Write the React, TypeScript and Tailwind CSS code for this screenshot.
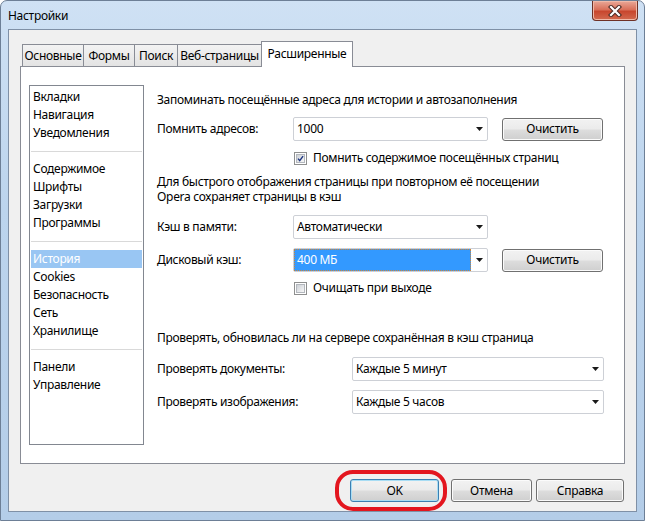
import type { ReactNode } from 'react';

const groups = [
  ['Вкладки', 'Навигация', 'Уведомления'],
  ['Содержимое', 'Шрифты', 'Загрузки', 'Программы'],
  ['История', 'Cookies', 'Безопасность', 'Сеть', 'Хранилище'],
  ['Панели', 'Управление'],
];

const tabs = [
  { label: 'Основные', w: 'w-[62px]' },
  { label: 'Формы', w: 'w-[52px]' },
  { label: 'Поиск', w: 'w-[44px]' },
  { label: 'Веб-страницы', w: 'w-[85px]' },
];

function Arrow() {
  return (
    <svg width="7" height="4" viewBox="0 0 7 4" aria-hidden="true">
      <path d="M0 0h7L3.5 4z" fill="#1a1a1a" />
    </svg>
  );
}

function Combo({ value, width, selected = false }: { value: string; width: string; selected?: boolean }) {
  return (
    <div className={`flex h-[24px] ${width} items-center rounded-[2px] border border-[#cdd0d6] bg-white`}>
      {selected ? (
        <div className="flex h-full flex-1 items-center border border-dotted border-[#c8843c] bg-[#3399ff] pl-[2px] text-white">
          {value}
        </div>
      ) : (
        <div className="flex-1 pl-[3px]">{value}</div>
      )}
      <span className="flex w-[16px] justify-center">
        <Arrow />
      </span>
    </div>
  );
}

function Button({ children, width, primary = false }: { children: ReactNode; width: string; primary?: boolean }) {
  return (
    <button
      type="button"
      className={`flex h-[23px] ${width} items-center justify-center rounded-[3px] border bg-[linear-gradient(#f2f2f2_0%,#ebebeb_48%,#dddddd_52%,#cfcfcf_100%)] ${
        primary ? 'border-[#3c7fb1] shadow-[inset_0_0_0_1px_#a8ddf4]' : 'border-[#707070] shadow-[inset_0_0_0_1px_#fbfbfb]'
      }`}
    >
      {children}
    </button>
  );
}

function Checkbox({ checked }: { checked: boolean }) {
  return (
    <span className="flex h-[13px] w-[13px] shrink-0 items-center justify-center border border-[#8e8f8f] bg-white">
      <span className="flex h-[9px] w-[9px] items-center justify-center border border-[#b3b7bd] bg-[linear-gradient(135deg,#cdd1d7,#f7f7f7)]">
        {checked && (
          <svg width="9" height="9" viewBox="0 0 9 9" aria-hidden="true">
            <path d="M1.3 4.6 3.5 7.2 7.8 1.4" fill="none" stroke="#1d3580" strokeWidth="1.8" />
          </svg>
        )}
      </span>
    </span>
  );
}

function CloseGlyph() {
  return (
    <svg width="14" height="12" viewBox="0 0 14 12" aria-hidden="true">
      <path d="M3 2 11 10M11 2 3 10" stroke="#4a2a24" strokeWidth="4.2" strokeLinecap="square" />
      <path d="M3 2 11 10M11 2 3 10" stroke="#ffffff" strokeWidth="2.2" strokeLinecap="square" />
    </svg>
  );
}

export default function App() {
  return (
    <div className="h-[521px] w-[645px] overflow-hidden font-['Noto_Sans',sans-serif] text-[12px] leading-[16px] tracking-[-0.3px] text-black">
      <div className="flex h-full w-full flex-col rounded-t-[7px] border border-[#6d7f96] bg-[linear-gradient(180deg,#cfe1f4_0%,#bcd4ed_40%,#b4cde8_100%)]">
        <div className="flex h-[28px] items-start">
          <span className="mt-[7px] pl-[7px] text-black">Настройки</span>
          <div className="ml-auto mr-[6px] flex h-[20px] w-[46px] items-center justify-center rounded-b-[4px] border border-t-0 border-[#6e3126] bg-[linear-gradient(180deg,#e9a898_0%,#d9705a_45%,#c8472e_55%,#d26a4f_100%)] shadow-[inset_0_0_0_1px_#f0b9a8]">
            <CloseGlyph />
          </div>
        </div>

        <div className="mx-[7px] flex h-[483px] flex-col border border-[#7f90a6] bg-[#f0f0f0]">
          <div className="mx-[11px] mt-[11px] flex h-[25px] items-end pl-[2px]">
            {tabs.map((tab, i) => (
              <div
                key={tab.label}
                className={`flex h-[22px] ${tab.w} items-center justify-center border border-b-0 border-[#898c95] bg-[linear-gradient(#f3f3f3,#e3e3e3)] ${
                  i > 0 ? '-ml-px' : ''
                }`}
              >
                {tab.label}
              </div>
            ))}
            <div className="relative z-10 -mb-px -ml-px flex h-[26px] w-[92px] items-center justify-center border border-b-0 border-[#898c95] bg-white pb-[2px]">
              Расширенные
            </div>
          </div>

          <div className="mx-[11px] flex h-[398px] border border-[#898c95] bg-white">
            <div className="ml-[8px] mt-[18px] h-[360px] w-[115px] border border-[#828790] bg-white pt-[2px]">
              {groups.map((group, gi) => (
                <div key={gi}>
                  {gi > 0 && (
                    <div className="flex h-[18px] items-center px-[1px]">
                      <div className="h-px w-full bg-[#d9d9d9]" />
                    </div>
                  )}
                  {group.map((item) => (
                    <div
                      key={item}
                      className={`mx-[1px] flex h-[18px] items-center pl-[2px] ${
                        item === 'История' ? 'bg-[#99c6f3] text-white' : ''
                      }`}
                    >
                      {item}
                    </div>
                  ))}
                </div>
              ))}
            </div>

            <div className="ml-[13px] flex flex-col">
              <div className="mt-[25px] h-[16px]">Запоминать посещённые адреса для истории и автозаполнения</div>

              <div className="mt-[9px] flex items-center">
                <span className="w-[136px]">Помнить адресов:</span>
                <Combo value="1000" width="w-[195px]" />
                <span className="ml-[14px]">
                  <Button width="w-[101px]">Очистить</Button>
                </span>
              </div>

              <div className="mt-[9px] flex h-[16px] items-center pl-[137px]">
                <Checkbox checked />
                <span className="ml-[6px]">Помнить содержимое посещённых страниц</span>
              </div>

              <div className="mt-[9px] flex flex-col gap-[1px] leading-[14px]">
                <div>Для быстрого отображения страницы при повторном её посещении</div>
                <div>Opera сохраняет страницы в кэш</div>
              </div>

              <div className="mt-[11px] flex items-center">
                <span className="w-[136px]">Кэш в памяти:</span>
                <Combo value="Автоматически" width="w-[195px]" />
              </div>

              <div className="mt-[9px] flex items-center">
                <span className="w-[136px]">Дисковый кэш:</span>
                <Combo value="400 МБ" width="w-[195px]" selected />
                <span className="ml-[14px]">
                  <Button width="w-[101px]">Очистить</Button>
                </span>
              </div>

              <div className="mt-[8px] flex h-[16px] items-center pl-[137px]">
                <Checkbox checked={false} />
                <span className="ml-[6px]">Очищать при выходе</span>
              </div>

              <div className="mt-[34px] h-[16px]">Проверять, обновилась ли на сервере сохранённая в кэш страница</div>

              <div className="mt-[11px] flex items-center">
                <span className="w-[195px]">Проверять документы:</span>
                <Combo value="Каждые 5 минут" width="w-[252px]" />
              </div>

              <div className="mt-[9px] flex items-center">
                <span className="w-[195px]">Проверять изображения:</span>
                <Combo value="Каждые 5 часов" width="w-[252px]" />
              </div>
            </div>
          </div>

          <div className="relative mr-[12px] mt-[15px] flex justify-end">
            <Button width="w-[89px]" primary>
              OK
            </Button>
            <span className="ml-[12px]">
              <Button width="w-[81px]">Отмена</Button>
            </span>
            <span className="ml-[4px]">
              <Button width="w-[88px]">Справка</Button>
            </span>
            <div className="pointer-events-none absolute left-[326px] top-[-9px] h-[41px] w-[112px] rounded-[18px] border-[4px] border-[#e3161f]" />
          </div>
        </div>
      </div>
    </div>
  );
}
